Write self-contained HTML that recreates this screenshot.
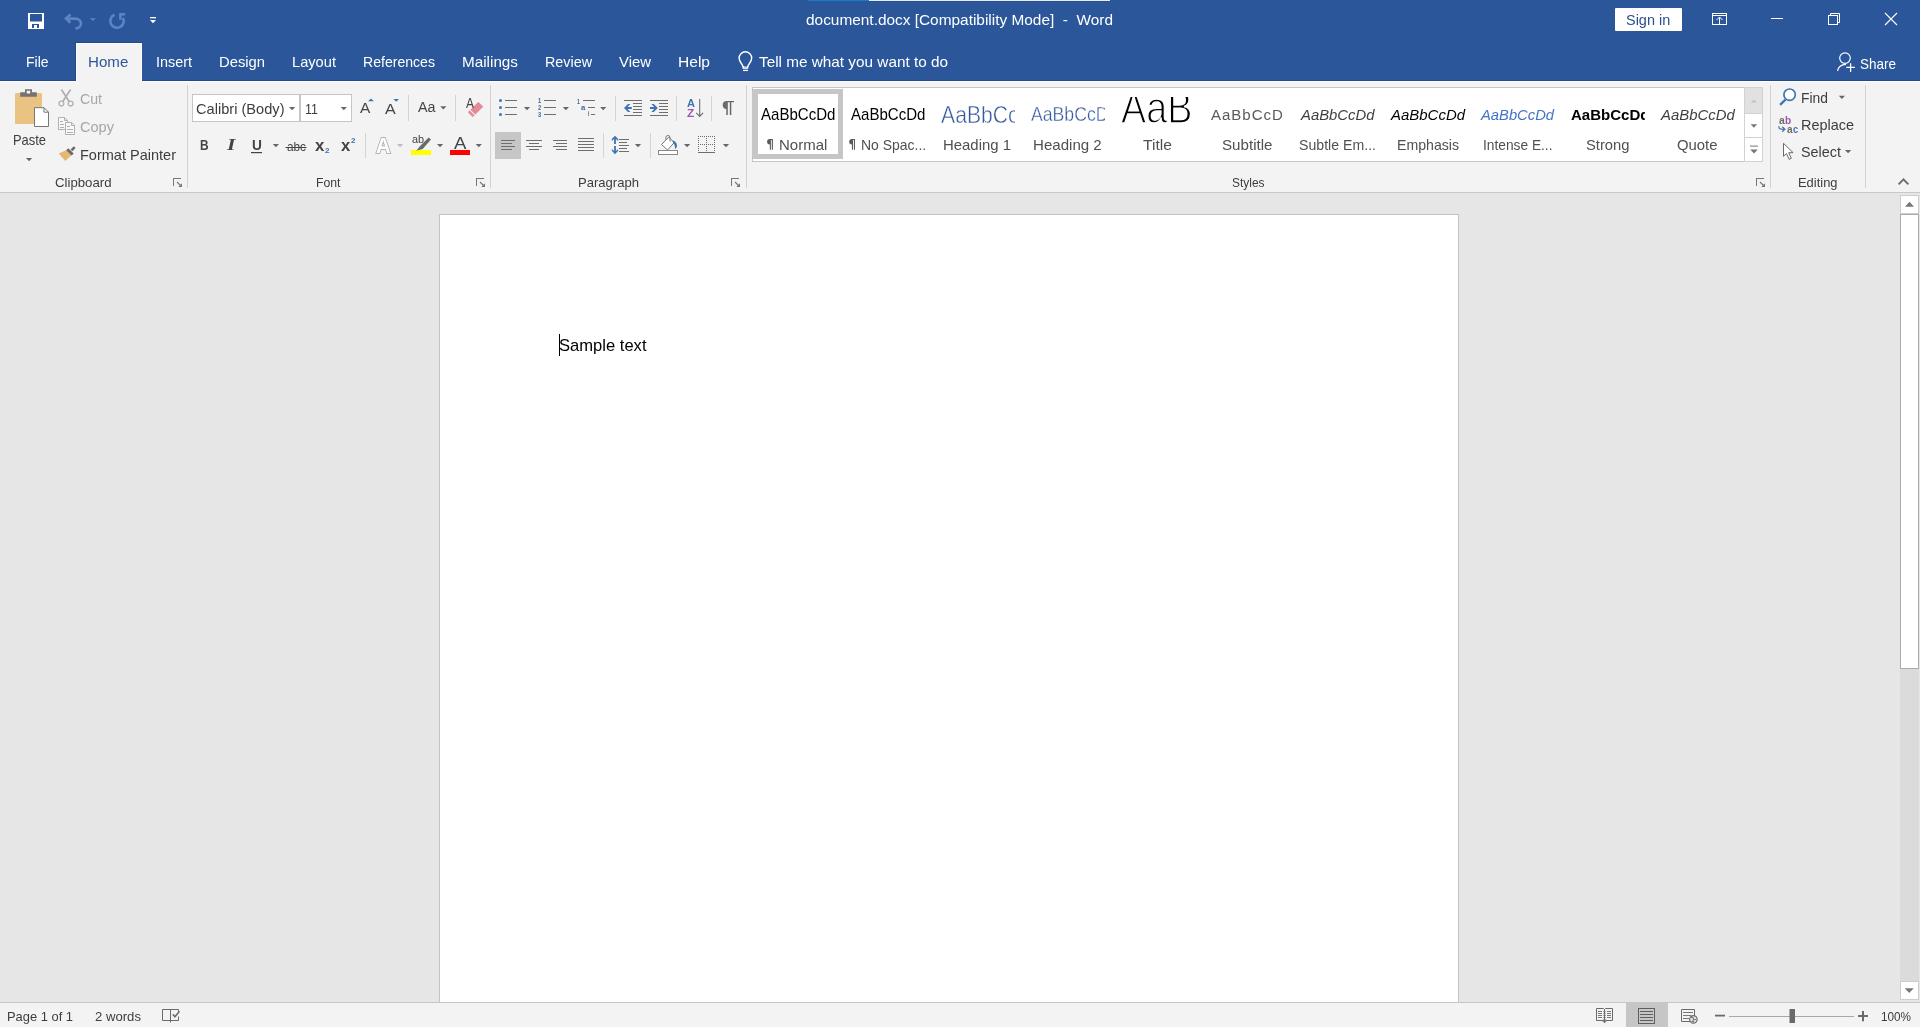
<!DOCTYPE html>
<html><head><meta charset="utf-8"><title>document.docx - Word</title>
<style>
html,body{margin:0;padding:0}
body{width:1920px;height:1027px;overflow:hidden;position:relative;background:#e6e6e6;font-family:"Liberation Sans",sans-serif}
.a{position:absolute}
.t{position:absolute;white-space:pre;line-height:1;transform-origin:0 0}
svg{position:absolute;overflow:visible}
.sep{position:absolute;width:1px;background:#d8d8d8}
.s2{background:#d4d4d4}

</style></head>
<body>
<!-- header -->
<div class="a" style="left:0;top:0;width:1920px;height:80px;background:#2b579a"></div>
<div class="a" style="left:808px;top:0;width:302px;height:1px;background:#e6ecf5"></div>
<div class="a" style="left:808px;top:0;width:61px;height:1px;background:#1979ca"></div>
<div class="a" style="left:869px;top:1px;width:241px;height:1px;background:#28518f"></div>
<div class="a" style="left:0;top:80px;width:1920px;height:1px;background:#244a83"></div>
<div class="a" style="left:0;top:81px;width:1920px;height:1px;background:#fafcff"></div>
<div class="a" style="left:75px;top:42px;width:67px;height:39px;background:#244a83"></div>
<div class="a" style="left:76px;top:43px;width:66px;height:39px;background:#f3f3f3;border:1px solid #fafcff;border-bottom:none;box-sizing:border-box"></div>
<div class="a" style="left:1615px;top:8px;width:67px;height:23px;background:#fff;border-radius:1px"></div>
<!-- ribbon -->
<div class="a" style="left:0;top:82px;width:1920px;height:110px;background:#f3f3f3"></div>
<div class="a" style="left:0;top:192px;width:1920px;height:1px;background:#c9c9c9"></div>
<!-- group separators -->
<div class="sep" style="left:187px;top:85px;height:103px;background:#d2d2d2"></div>
<div class="sep" style="left:490px;top:85px;height:103px;background:#d2d2d2"></div>
<div class="sep" style="left:746px;top:85px;height:103px;background:#d2d2d2"></div>
<div class="sep" style="left:1770px;top:85px;height:103px;background:#d2d2d2"></div>
<div class="sep" style="left:1865px;top:85px;height:103px;background:#d2d2d2"></div>
<!-- inner separators -->
<div class="sep s2" style="left:408px;top:95px;height:26px"></div>
<div class="sep s2" style="left:455px;top:95px;height:26px"></div>
<div class="sep s2" style="left:365px;top:133px;height:25px"></div>
<div class="sep s2" style="left:615px;top:96px;height:25px"></div>
<div class="sep s2" style="left:676px;top:96px;height:25px"></div>
<div class="sep s2" style="left:711px;top:96px;height:25px"></div>
<div class="sep s2" style="left:603px;top:133px;height:25px"></div>
<div class="sep s2" style="left:650px;top:133px;height:25px"></div>
<!-- font boxes -->
<div class="a" style="left:192px;top:94px;width:106px;height:26px;background:#fff;border:1px solid #c6c6c6"></div>
<div class="a" style="left:300px;top:94px;width:50px;height:26px;background:#fff;border:1px solid #c6c6c6"></div>
<!-- selected align-left -->
<div class="a" style="left:495px;top:132px;width:26px;height:27px;background:#c6c6c6"></div>
<!-- styles gallery -->
<div class="a" style="left:752px;top:87px;width:992px;height:73px;background:#fff;border:1px solid #c6c6c6"></div>
<div class="a" style="left:753px;top:89px;width:90px;height:70px;background:#c6c6c6"></div>
<div class="a" style="left:758px;top:94px;width:80px;height:60px;background:#fff"></div>
<div class="a" style="left:1744px;top:87px;width:17px;height:25px;background:#e1e1e1;border:1px solid #d2d2d2"></div>
<div class="a" style="left:1744px;top:113px;width:17px;height:23px;background:#fff;border:1px solid #d2d2d2"></div>
<div class="a" style="left:1744px;top:137px;width:17px;height:23px;background:#fff;border:1px solid #d2d2d2"></div>
<!-- page -->
<div class="a" style="left:439px;top:214px;width:1018px;height:800px;background:#fff;border:1px solid #c4c4c4"></div>
<div class="a" style="left:559px;top:334px;width:1px;height:22px;background:#000"></div>
<!-- vertical scrollbar -->
<div class="a" style="left:1900px;top:214px;width:19px;height:767px;background:#dbdbdb"></div>
<div class="a" style="left:1900px;top:195px;width:17px;height:17px;background:#fff;border:1px solid #cdcdcd"></div>
<div class="a" style="left:1900px;top:214px;width:17px;height:453px;background:#fff;border:1px solid #ababab"></div>
<div class="a" style="left:1900px;top:981px;width:17px;height:17px;background:#fff;border:1px solid #cdcdcd"></div>
<!-- status bar -->
<div class="a" style="left:0;top:1002px;width:1920px;height:25px;background:#f3f3f3;border-top:1px solid #c6c6c6;box-sizing:border-box"></div>
<div class="a" style="left:1626px;top:1003px;width:42px;height:24px;background:#c6c6c6"></div>
<svg width="1920" height="1027" viewBox="0 0 1920 1027" style="left:0;top:0">
<!-- ===== QAT ===== -->
<g fill="#fff">
  <path fill-rule="evenodd" d="M28 13h16v16h-16z M30 14h12v7.5h-12z M32 24h7v4h-7z"/>
  <rect x="34" y="25" width="3" height="3"/>
  <rect x="150" y="17" width="6" height="1.3"/>
  <path d="M150 20h6l-3 3.3z"/>
</g>
<g fill="none" stroke="#5d84c2" stroke-width="2.6" stroke-linejoin="miter">
  <path d="M70.5 14.5l-4.6 4 4.6 4.2"/>
  <path d="M66.5 18.6h8.5c4 0 6 2.4 6 5 0 2.6-2.6 4.6-5.6 5"/>
  <path d="M123 18a6.700 6.700 0 1 1 -8.500 -3.200"/>
  <path d="M120.400 19.700v-5.500h4.800"/>
</g>
<path d="M90 18.2h5.8l-2.9 2.8z" fill="#5d84c2"/>
<!-- ===== window controls ===== -->
<g fill="none" stroke="#fff" stroke-width="1">
  <rect x="1712.5" y="13.5" width="14" height="11"/>
  <path d="M1712 15.5h15"/>
  <path d="M1719.5 24.5v-7 M1716.5 20l3-3 3 3"/>
  <path d="M1771 18.5h12"/>
  <rect x="1828.5" y="15.5" width="9" height="9"/>
  <path d="M1830.500 15.500v-2h9v9h-2"/>
  <path d="M1885 13l12 12 M1897 13l-12 12" stroke-width="1.1"/>
</g>
<!-- ===== bulb ===== -->
<g fill="none" stroke="#fff" stroke-width="1.4">
  <path d="M742.9 66.6c0-2.6-3.800-4.200-3.800-8.500a6.300 6.300 0 0 1 12.600 0c0 4.300-3.800 5.900-3.800 8.500z"/>
  <rect x="742.600" y="66.200" width="5.600" height="2.600" fill="#fff" stroke="none"/>
  <path d="M744 66.800h3" stroke="#2b579a" stroke-width=".8"/>
  <path d="M743.100 70.400h4.800" stroke-width="1.300"/>
</g>
<!-- ===== share ===== -->
<g fill="none" stroke="#fff" stroke-width="1.2">
  <circle cx="1845" cy="58.100" r="5.300"/>
  <path d="M1837.600 71c.6-4 3.600-6.500 8.400-6.700"/>
  <path d="M1846.300 67.400h8.600 M1850.600 63.200v8.700" stroke-width="1.3"/>
</g>
</svg>
<svg width="1920" height="1027" viewBox="0 0 1920 1027" style="left:0;top:0">
<!-- ===== Paste ===== -->
<rect x="15" y="93" width="27" height="31" rx="1.2" fill="#eac282"/>
<path fill-rule="evenodd" fill="#737373" d="M20.200 92.300h4.800v-3.100h7v3.100h4.800v4.400h-16.600z M26.700 90.800h3.500v3h-3.500z"/>
<path d="M34.500 107.700h9.500l4.500 4.500v14.300h-14z" fill="#fff" stroke="#767676" stroke-width="1"/>
<path d="M44 107.700v4.500h4.500" fill="none" stroke="#767676" stroke-width="1"/>
<path d="M26 158h6.200l-3.100 3.200z" fill="#666"/>
<!-- ===== Cut (disabled) ===== -->
<g fill="none" stroke="#b1b1b1" stroke-width="1.300">
  <circle cx="61.400" cy="103.600" r="2.400"/>
  <circle cx="70.600" cy="103.600" r="2.400"/>
</g>
<path d="M61.400 89.500l7.800 12 M70.600 89.500l-7.800 12" stroke="#b1b1b1" stroke-width="1.800" fill="none"/>
<!-- ===== Copy (disabled) ===== -->
<g fill="#f8f8f8" stroke="#b1b1b1" stroke-width="1">
  <path d="M58.500 117.500h6l3 3v9h-9z"/>
  <path d="M65.500 122.500h6l3 3v9h-9z"/>
</g>
<g fill="none" stroke="#b1b1b1" stroke-width="1">
  <path d="M64.500 117.500v3h3 M71.500 122.500v3h3"/>
  <path d="M60 121.500h3 M60 124.500h4 M60 127.500h4 M67 126.500h3 M67 129.500h6 M67 132.500h6"/>
</g>
<!-- ===== Format painter ===== -->
<path d="M58.700 153.600l8.300-3.800 5 5-6.700 6.200z" fill="#e5b973"/>
<path d="M66.300 150.200l2-2 5.400 5.400-2 2z" fill="#6a6a6a"/>
<path d="M70.600 149.400l3.200-3.200 1.800 1.800-3.200 3.200z" fill="#6a6a6a"/>
<!-- ===== launchers ===== -->
<g transform="translate(173,178)" fill="#777"><rect x="0" y="0" width="1" height="8" shape-rendering="crispEdges"/><rect x="0" y="0" width="8" height="1" shape-rendering="crispEdges"/><path d="M4 4l4.500 4.500" stroke="#777" stroke-width="1.100" fill="none"/><path d="M9 5.300v3.700h-3.700z"/></g>
<g transform="translate(476,178)" fill="#777"><rect x="0" y="0" width="1" height="8" shape-rendering="crispEdges"/><rect x="0" y="0" width="8" height="1" shape-rendering="crispEdges"/><path d="M4 4l4.500 4.500" stroke="#777" stroke-width="1.100" fill="none"/><path d="M9 5.300v3.700h-3.700z"/></g>
<g transform="translate(731,178)" fill="#777"><rect x="0" y="0" width="1" height="8" shape-rendering="crispEdges"/><rect x="0" y="0" width="8" height="1" shape-rendering="crispEdges"/><path d="M4 4l4.500 4.500" stroke="#777" stroke-width="1.100" fill="none"/><path d="M9 5.300v3.700h-3.700z"/></g>
<g transform="translate(1756,178)" fill="#777"><rect x="0" y="0" width="1" height="8" shape-rendering="crispEdges"/><rect x="0" y="0" width="8" height="1" shape-rendering="crispEdges"/><path d="M4 4l4.500 4.500" stroke="#777" stroke-width="1.100" fill="none"/><path d="M9 5.300v3.700h-3.700z"/></g>
<!-- ===== Font group ===== -->
<g fill="#666">
  <path d="M289 107h6.200l-3.100 3.200z"/>
  <path d="M340.700 107h6.200l-3.100 3.200z"/>
  <path d="M440.200 106.300h6.200l-3.100 3.200z"/>
  <path d="M272.800 144h6.200l-3.100 3.200z"/>
  <path d="M437 144h6.200l-3.100 3.200z"/>
  <path d="M475.700 144h6.200l-3.100 3.200z"/>
</g>
<path d="M397 144h6.200l-3.100 3.200z" fill="#bdbdbd"/>
<!-- grow/shrink triangles -->
<path d="M368.200 101.200l2.800-2.800 2.800 2.800z" fill="#3e74b2"/>
<path d="M393.400 99h5.600l-2.800 2.800z" fill="#3e74b2"/>
<!-- clear formatting eraser -->
<g transform="translate(1.1,-1.1) rotate(-45 475.500 109.500)">
  <rect x="466.500" y="106" width="15" height="7" rx="1" fill="#e58b98"/>
  <rect x="469.200" y="106" width="1" height="7" fill="#f3f3f3"/>
</g>
<!-- underline bar -->
<rect x="251" y="152" width="11" height="1.200" fill="#444"/>
<!-- strikethrough -->
<rect x="285.500" y="147" width="21" height="1" fill="#444"/>
<!-- highlight -->
<rect x="411" y="150" width="20" height="5" fill="#ffff00"/>
<path d="M428.600 137.400l2.400 2.200-8.300 9.500-6.400 1.600 3.600-4.400z" fill="#6a6a6a"/>
<!-- font colour bar -->
<rect x="450" y="150" width="20" height="5" fill="#ff0000"/>
</svg>
<svg width="1920" height="1027" viewBox="0 0 1920 1027" style="left:0;top:0">
<!-- ===== Paragraph row 1 ===== -->
<g fill="#6e6e6e" shape-rendering="crispEdges">
  <!-- bullets -->
  <rect x="505" y="100" width="12" height="1"/><rect x="505" y="107" width="12" height="1"/><rect x="505" y="114" width="12" height="1"/>
  <!-- numbering -->
  <rect x="544" y="100" width="12" height="1"/><rect x="544" y="107" width="12" height="1"/><rect x="544" y="114" width="12" height="1"/>
  <!-- multilevel -->
  <rect x="583" y="100" width="12" height="1"/><rect x="588" y="107" width="7" height="1"/><rect x="591" y="114" width="4" height="1"/>
  <!-- decrease indent -->
  <rect x="624" y="100" width="18" height="1"/><rect x="633" y="103" width="9" height="1"/><rect x="633" y="106" width="9" height="1"/><rect x="633" y="109" width="9" height="1"/><rect x="633" y="112" width="9" height="1"/><rect x="624" y="115" width="18" height="1"/>
  <!-- increase indent -->
  <rect x="650" y="100" width="18" height="1"/><rect x="659" y="103" width="9" height="1"/><rect x="659" y="106" width="9" height="1"/><rect x="659" y="109" width="9" height="1"/><rect x="659" y="112" width="9" height="1"/><rect x="650" y="115" width="18" height="1"/>
  <!-- align left -->
  <rect x="501" y="140" width="14" height="1"/><rect x="501" y="143" width="11" height="1"/><rect x="501" y="146" width="14" height="1"/><rect x="501" y="149" width="11" height="1"/>
  <!-- center -->
  <rect x="526" y="140" width="16" height="1"/><rect x="529" y="143" width="10" height="1"/><rect x="526" y="146" width="16" height="1"/><rect x="529" y="149" width="10" height="1"/>
  <!-- right -->
  <rect x="553" y="140" width="14" height="1"/><rect x="556" y="143" width="11" height="1"/><rect x="553" y="146" width="14" height="1"/><rect x="556" y="149" width="11" height="1"/>
  <!-- justify -->
  <rect x="578" y="138" width="16" height="1"/><rect x="578" y="141" width="16" height="1"/><rect x="578" y="144" width="16" height="1"/><rect x="578" y="147" width="16" height="1"/><rect x="578" y="150" width="16" height="1"/>
  <!-- line spacing lines -->
  <rect x="619" y="139" width="10" height="1"/><rect x="619" y="142" width="8" height="1"/><rect x="619" y="145" width="10" height="1"/><rect x="619" y="148" width="8" height="1"/><rect x="619" y="151" width="10" height="1"/>
  <!-- borders bottom line -->
  <rect x="698" y="152" width="17" height="1"/>
</g>
<g fill="#3e74b2">
  <circle cx="500.500" cy="100.500" r="1.500"/><circle cx="500.500" cy="107.500" r="1.500"/><circle cx="500.500" cy="114.500" r="1.500"/>
  <!-- decrease indent arrow -->
  <path d="M624 108l4-4h2.400l-2.800 2.900h4.200v2.200h-4.200l2.800 2.900h-2.400z"/>
  <!-- increase indent arrow -->
  <path d="M657.800 108l-4-4h-2.400l2.800 2.900h-4.200v2.200h4.200l-2.800 2.900h2.400z"/>
  <!-- line spacing arrows -->
  <path d="M615 135.700l3.200 3.400v1.800l-2.300-2v5h-1.800v-5l-2.300 2v-1.800z"/>
  <path d="M615 154.200l3.200-3.400v-1.800l-2.300 2v-5h-1.800v5l-2.300-2v1.800z"/>
</g>
<!-- dropdown arrows -->
<g fill="#666">
  <path d="M523.900 107h6.200l-3.100 3.200z"/>
  <path d="M562.800 107h6.200l-3.100 3.200z"/>
  <path d="M600.100 107h6.200l-3.100 3.200z"/>
  <path d="M634.900 144h6.200l-3.100 3.200z"/>
  <path d="M684 144h6.200l-3.100 3.200z"/>
  <path d="M722.900 144h6.200l-3.100 3.200z"/>
</g>
<!-- sort arrow -->
<path d="M699.700 99v17 M696.300 112.800l3.400 3.600 3.400-3.600" fill="none" stroke="#6e6e6e" stroke-width="1.100"/>
<!-- pilcrow -->
<path d="M734 101h-7.200a4.100 4.100 0 0 0 0 8.200h-.5v5.700h1.500v-12.700h2v12.700h1.500v-12.700h2.700z" fill="#6a6a6a"/>
<!-- shading bucket -->
<rect x="658.500" y="150.500" width="19" height="4" fill="#fff" stroke="#8a8a8a" stroke-width="1"/>
<path d="M668.800 137l5.400 5.600-6.700 7.400-6-5.500z" fill="#fff" stroke="#777" stroke-width="1"/>
<path d="M665.900 139.800v-2.200a2 2 0 0 1 4 -.3l.2 4.300" fill="none" stroke="#777" stroke-width="1"/>
<path d="M672.300 140.400c3 .3 5 2.700 4.700 6.400l-2 2.400c0-2.800-.2-4.400-1.400-5.800z" fill="#3e74b2"/>
<!-- borders dotted grid -->
<g stroke="#6e6e6e" stroke-width="1" stroke-dasharray="1 1" fill="none" shape-rendering="crispEdges">
  <path d="M698 136.500h17 M698 144.500h17"/>
  <path d="M698.500 136v16 M706.500 136v16 M714.500 136v16"/>
</g>
</svg>
<svg width="1920" height="1027" viewBox="0 0 1920 1027" style="left:0;top:0">
<!-- ===== gallery scroll buttons ===== -->
<path d="M1750.600 102.400l3.300-3 3.300 3z" fill="#c3c3c3"/>
<path d="M1750.600 124.300h6.600l-3.300 3.400z" fill="#777"/>
<rect x="1750" y="145.600" width="8" height="1" fill="#777"/>
<path d="M1750.200 149.600h7.600l-3.800 4z" fill="#777"/>
<!-- ===== Editing ===== -->
<circle cx="1789.600" cy="94.700" r="5.700" fill="#fff" stroke="#3e74b2" stroke-width="1.700"/>
<path d="M1785.400 99.600l-5.300 5.300" stroke="#3e74b2" stroke-width="2.200" fill="none"/>
<path d="M1838.800 95.700h6.200l-3.100 3.200z" fill="#666"/>
<path d="M1845 150h6.200l-3.100 3.200z" fill="#666"/>
<!-- replace arrow -->
<path d="M1778.800 126.300c0 2.600 1 3 5 3 M1782.300 126.800l2.600 2.500-2.600 2.500" fill="none" stroke="#3e74b2" stroke-width="1.200"/>
<!-- select cursor -->
<path d="M1783.500 143.300v13l3-2.800 2.600 5.800 2.200-1-2.600-5.600h4.400z" fill="#fff" stroke="#6a6a6a" stroke-width="1" stroke-linejoin="miter"/>
<!-- collapse chevron -->
<path d="M1898.600 184.300l4.900-5 4.900 5" fill="none" stroke="#6a6a6a" stroke-width="1.800"/>
<!-- ===== scrollbar arrows ===== -->
<path d="M1905 206.800l4.500-5 4.500 5z" fill="#777"/>
<path d="M1904.700 988.300h9l-4.500 4.600z" fill="#777"/>
<!-- ===== status bar ===== -->
<!-- proofing icon -->
<g fill="none" stroke="#6a6a6a" stroke-width="1">
  <path d="M170.500 1009.500h-8v11h8 M170.500 1009v13.500 M170.500 1009.500h8v2 M178.500 1016.500v4h-8"/>
  <path d="M172.800 1014.300l2.100 2.500 4.600-5.600" stroke-width="1.500"/>
</g>
<!-- read mode -->
<g fill="none" stroke="#6a6a6a" stroke-width="1">
  <path d="M1604.500 1009v13.500 M1602.800 1021l1.700 1.800 1.700-1.800 M1596.500 1008.500h7l1 1 1-1h7v12h-7l-1 1-1-1h-7z"/>
  <path d="M1598 1011.500h4 M1598 1013.500h4 M1598 1015.500h4 M1598 1017.500h4 M1607 1011.500h4 M1607 1013.500h4 M1607 1015.500h4 M1607 1017.500h4" stroke-width=".9"/>
  <path d="M1603.200 1011.500h2.600 M1603.200 1013.500h2.600 M1603.200 1015.500h2.600 M1603.200 1017.500h2.600 M1603.200 1019.500h2.600" stroke-width=".7"/>
</g>
<!-- print layout (selected) -->
<g fill="none" stroke="#5e5e5e" stroke-width="1" shape-rendering="crispEdges">
  <rect x="1638.500" y="1008.500" width="16" height="15"/>
  <path d="M1640 1011.500h13 M1640 1014.500h13 M1640 1017.500h13 M1640 1020.500h13"/>
</g>
<!-- web layout -->
<g fill="none" stroke="#6a6a6a" stroke-width="1">
  <path d="M1690 1021.500h-8.500v-12h13v6"/>
  <path d="M1683 1012.500h10 M1683 1015.500h8 M1683 1018.500h6" stroke-width=".9"/>
</g>
<circle cx="1693.400" cy="1019.400" r="3.700" fill="#e9e9e9" stroke="#6a6a6a" stroke-width="1.200"/>
<path d="M1691 1017.500c1.500-.8 2.500 0 2.300 1.300s1.700 1.200 2.700.3 M1691.500 1021.500c1-.6 1.800-.6 2.500.8" fill="none" stroke="#6a6a6a" stroke-width="1.100"/>
<!-- zoom slider -->
<rect x="1715" y="1014.700" width="10" height="1.800" fill="#6a6a6a"/>
<rect x="1729" y="1016" width="125" height="1" fill="#a8a8a8"/>
<rect x="1789.500" y="1009" width="5.500" height="14" fill="#6a6a6a"/>
<path d="M1858.100 1016h9.800 M1863 1011v10.200" stroke="#6a6a6a" stroke-width="2" fill="none"/>
<!-- style pilcrows -->
<path d="M773.0 139h-3.200a2.700 2.700 0 0 0 0 5.400v5.400h1.100v-9.800h.9v9.800h1.100v-9.800h.1z" fill="#5a5a5a"/>
<path d="M855.1 139h-3.200a2.700 2.700 0 0 0 0 5.400v5.400h1.100v-9.800h.9v9.800h1.100v-9.800h.1z" fill="#5a5a5a"/>
</svg>

<div id="txt" style="position:absolute;left:0;top:0;width:1920px;height:1027px;will-change:transform">
<span class="t" style="left:806px;top:12px;font-size:15.5px;color:#fff;transform:scaleX(0.9936);">document.docx [Compatibility Mode]  -  Word</span>
<span class="t" style="left:1626.3px;top:12px;font-size:15px;color:#29508f;transform:scaleX(0.9635);">Sign in</span>
<span class="t" style="left:25.5px;top:54px;font-size:15px;color:#fff;transform:scaleX(0.9308);">File</span>
<span class="t" style="left:88.3px;top:54px;font-size:15px;color:#2b579a;transform:scaleX(1.0071);">Home</span>
<span class="t" style="left:156px;top:54px;font-size:15px;color:#fff;transform:scaleX(0.9596);">Insert</span>
<span class="t" style="left:219px;top:54px;font-size:15px;color:#fff;transform:scaleX(0.9849);">Design</span>
<span class="t" style="left:292px;top:54px;font-size:15px;color:#fff;transform:scaleX(0.9768);">Layout</span>
<span class="t" style="left:363px;top:54px;font-size:15px;color:#fff;transform:scaleX(0.9385);">References</span>
<span class="t" style="left:462px;top:54px;font-size:15px;color:#fff;transform:scaleX(1.0176);">Mailings</span>
<span class="t" style="left:545px;top:54px;font-size:15px;color:#fff;transform:scaleX(0.9555);">Review</span>
<span class="t" style="left:619px;top:54px;font-size:15px;color:#fff;transform:scaleX(0.9922);">View</span>
<span class="t" style="left:678px;top:54px;font-size:15px;color:#fff;transform:scaleX(1.0370);">Help</span>
<span class="t" style="left:759px;top:54px;font-size:15px;color:#fff;transform:scaleX(1.0210);">Tell me what you want to do</span>
<span class="t" style="left:1859.5px;top:56px;font-size:15px;color:#fff;transform:scaleX(0.8993);">Share</span>
<span class="t" style="left:12.5px;top:132px;font-size:15px;color:#3d3d3d;transform:scaleX(0.8603);">Paste</span>
<span class="t" style="left:80px;top:91px;font-size:15px;color:#a6a6a6;transform:scaleX(0.9424);">Cut</span>
<span class="t" style="left:80px;top:119px;font-size:15px;color:#a6a6a6;transform:scaleX(0.9706);">Copy</span>
<span class="t" style="left:80px;top:147px;font-size:15px;color:#3d3d3d;transform:scaleX(0.9677);">Format Painter</span>
<span class="t" style="left:54.5px;top:176px;font-size:13.5px;color:#3d3d3d;transform:scaleX(0.9776);">Clipboard</span>
<span class="t" style="left:316px;top:176px;font-size:13.5px;color:#3d3d3d;transform:scaleX(0.9069);">Font</span>
<span class="t" style="left:578px;top:176px;font-size:13.5px;color:#3d3d3d;transform:scaleX(0.9675);">Paragraph</span>
<span class="t" style="left:1232px;top:176px;font-size:13.5px;color:#3d3d3d;transform:scaleX(0.8840);">Styles</span>
<span class="t" style="left:1798px;top:176px;font-size:13.5px;color:#3d3d3d;transform:scaleX(0.9569);">Editing</span>
<span class="t" style="left:195.5px;top:101px;font-size:15px;color:#3d3d3d;transform:scaleX(0.9740);">Calibri (Body)</span>
<span class="t" style="left:304.5px;top:101px;font-size:15px;color:#3d3d3d;transform:scaleX(0.8345);">11</span>
<span class="t" style="left:1801px;top:90px;font-size:15px;color:#3d3d3d;transform:scaleX(0.9251);">Find</span>
<span class="t" style="left:1801px;top:117px;font-size:15px;color:#3d3d3d;transform:scaleX(0.9628);">Replace</span>
<span class="t" style="left:1801px;top:144px;font-size:15px;color:#3d3d3d;transform:scaleX(0.9592);">Select</span>
<span class="t" style="left:778.9px;top:137px;font-size:15px;color:#505050;transform:scaleX(0.9991);">Normal</span>
<span class="t" style="left:861px;top:137px;font-size:15px;color:#505050;transform:scaleX(0.9308);">No Spac...</span>
<span class="t" style="left:943px;top:137px;font-size:15px;color:#505050;transform:scaleX(0.9943);">Heading 1</span>
<span class="t" style="left:1033px;top:137px;font-size:15px;color:#505050;transform:scaleX(1.0053);">Heading 2</span>
<span class="t" style="left:1143px;top:137px;font-size:15px;color:#505050;transform:scaleX(1.0439);">Title</span>
<span class="t" style="left:1222px;top:137px;font-size:15px;color:#505050;transform:scaleX(1.0091);">Subtitle</span>
<span class="t" style="left:1299px;top:137px;font-size:15px;color:#505050;transform:scaleX(0.9424);">Subtle Em...</span>
<span class="t" style="left:1397px;top:137px;font-size:15px;color:#505050;transform:scaleX(0.9414);">Emphasis</span>
<span class="t" style="left:1483px;top:137px;font-size:15px;color:#505050;transform:scaleX(0.9158);">Intense E...</span>
<span class="t" style="left:1586px;top:137px;font-size:15px;color:#505050;transform:scaleX(0.9841);">Strong</span>
<span class="t" style="left:1677px;top:137px;font-size:15px;color:#505050;transform:scaleX(0.9908);">Quote</span>
<span class="t" style="left:761px;top:107px;font-size:15.75px;color:#000;transform:scaleX(0.9548);">AaBbCcDd</span>
<span class="t" style="left:851px;top:107px;font-size:15.75px;color:#000;transform:scaleX(0.9548);">AaBbCcDd</span>
<span class="t" style="left:1301px;top:107px;font-size:15px;color:#404040;transform:scaleX(0.9905);font-style:italic;">AaBbCcDd</span>
<span class="t" style="left:1390.5px;top:107px;font-size:15px;color:#000;transform:scaleX(0.9973);font-style:italic;">AaBbCcDd</span>
<span class="t" style="left:1481px;top:107px;font-size:15px;color:#4472c4;transform:scaleX(0.9838);font-style:italic;">AaBbCcDd</span>
<span class="t" style="left:1660.75px;top:107px;font-size:15px;color:#404040;transform:scaleX(0.9939);font-style:italic;">AaBbCcDd</span>
<span class="t" style="left:559px;top:337px;font-size:17px;color:#000;transform:scaleX(0.9748);">Sample text</span>
<span class="t" style="left:7px;top:1010px;font-size:13.5px;color:#3d3d3d;transform:scaleX(0.9557);">Page 1 of 1</span>
<span class="t" style="left:95px;top:1010px;font-size:13.5px;color:#3d3d3d;transform:scaleX(0.9729);">2 words</span>
<span class="t" style="left:1881px;top:1010px;font-size:13.5px;color:#3d3d3d;transform:scaleX(0.8688);">100%</span>
<div class="a" style="left:933px;top:88px;width:81.5px;height:47px;overflow:hidden"><span class="t" style="left:7.7999999999999545px;top:15.00px;font-size:24px;color:#375a9f;transform:scaleX(0.8825);-webkit-text-stroke:0.45px #fff;">AaBbCc</span></div>
<div class="a" style="left:1023px;top:88px;width:82.29999999999995px;height:47px;overflow:hidden"><span class="t" style="left:8px;top:17.00px;font-size:19.8px;color:#375a9f;transform:scaleX(0.8922);-webkit-text-stroke:0.35px #fff;">AaBbCcD</span></div>
<div class="a" style="left:1113px;top:97.2px;width:90px;height:37.8px;overflow:hidden"><span class="t" style="left:7.5px;top:-10.20px;font-size:43.5px;color:#000;transform:scaleX(0.8695);-webkit-text-stroke:1.4px #fff;">AaB</span></div>
<span class="t" style="left:1210.7px;top:107px;font-size:15.5px;color:#5a5a5a;transform:scaleX(0.9699);letter-spacing:1px;">AaBbCcD</span>
<div class="a" style="left:1563px;top:88px;width:82px;height:47px;overflow:hidden"><span class="t" style="left:7.5px;top:19.00px;font-size:15px;color:#000;transform:scaleX(1.0020);font-weight:bold;">AaBbCcDd</span></div>
<span class="t" style="left:360.2px;top:101px;font-size:14.5px;color:#444;transform:scaleX(1.0649);">A</span>
<span class="t" style="left:385px;top:102px;font-size:14.5px;color:#444;transform:scaleX(1.1063);">A</span>
<span class="t" style="left:417.6px;top:100px;font-size:14px;color:#444;transform:scaleX(1.0219);">Aa</span>
<span class="t" style="left:466px;top:96px;font-size:14px;color:#444;transform:scaleX(0.8562);">A</span>
<span class="t" style="left:199.9px;top:137px;font-size:15.5px;color:#444;transform:scaleX(0.7676);font-weight:bold;">B</span>
<span class="t" style="left:227.3px;top:137px;font-size:16.5px;color:#444;transform:scaleX(1.3080);font-weight:bold;font-style:italic;font-family:'Liberation Serif',serif;">I</span>
<span class="t" style="left:251.6px;top:137px;font-size:15.5px;color:#444;transform:scaleX(0.8837);font-weight:bold;">U</span>
<span class="t" style="left:286.5px;top:140px;font-size:13px;color:#444;transform:scaleX(0.9061);">abc</span>
<span class="t" style="left:315.2px;top:137px;font-size:16.5px;color:#444;transform:scaleX(1.0231);font-weight:bold;">x</span>
<span class="t" style="left:324.75px;top:147px;font-size:8px;color:#3e74b2;transform:scaleX(1.0105);font-weight:bold;">2</span>
<span class="t" style="left:340.7px;top:137px;font-size:16.5px;color:#444;transform:scaleX(1.0122);font-weight:bold;">x</span>
<span class="t" style="left:350.7px;top:137px;font-size:8px;color:#3e74b2;transform:scaleX(1.0105);font-weight:bold;">2</span>
<span class="t" style="left:375.6px;top:135px;font-size:22px;color:#fff;transform:scaleX(0.9188);font-weight:bold;-webkit-text-stroke:2px #b4b4b4;paint-order:stroke fill;">A</span>
<span class="t" style="left:411.7px;top:134px;font-size:11px;color:#444;transform:scaleX(0.9878);">ab</span>
<span class="t" style="left:453.7px;top:135px;font-size:17px;color:#444;transform:scaleX(1.0931);">A</span>
<span class="t" style="left:537.8px;top:98px;font-size:6.5px;color:#44699a;transform:scaleX(0.8828);font-weight:bold;">1</span>
<span class="t" style="left:537.8px;top:105px;font-size:6.5px;color:#44699a;transform:scaleX(0.8828);font-weight:bold;">2</span>
<span class="t" style="left:537.8px;top:112px;font-size:6.5px;color:#44699a;transform:scaleX(0.8828);font-weight:bold;">3</span>
<span class="t" style="left:576.75px;top:98px;font-size:7px;color:#44699a;transform:scaleX(0.7552);font-weight:bold;">1</span>
<span class="t" style="left:580.8px;top:104px;font-size:8px;color:#44699a;transform:scaleX(0.9656);font-weight:bold;">a</span>
<span class="t" style="left:588px;top:110px;font-size:7px;color:#44699a;transform:scaleX(0.7168);font-weight:bold;">i</span>
<span class="t" style="left:686.9px;top:98px;font-size:11.5px;color:#3e74b2;transform:scaleX(0.9624);font-weight:bold;">A</span>
<span class="t" style="left:686.9px;top:108px;font-size:10.5px;color:#9b57b0;transform:scaleX(1.1367);font-weight:bold;">Z</span>
<span class="t" style="left:1778.5px;top:115px;font-size:10.5px;color:#6a6a6a;transform:scaleX(0.9925);font-weight:bold;">a</span>
<span class="t" style="left:1784.8px;top:115px;font-size:10.5px;color:#9b57b0;transform:scaleX(0.9655);font-weight:bold;">b</span>
<span class="t" style="left:1786.7px;top:124px;font-size:10.5px;color:#6a6a6a;transform:scaleX(0.9583);font-weight:bold;">a</span>
<span class="t" style="left:1792.6px;top:124px;font-size:10.5px;color:#3e74b2;transform:scaleX(0.8898);font-weight:bold;">c</span>
</div>
</body></html>
